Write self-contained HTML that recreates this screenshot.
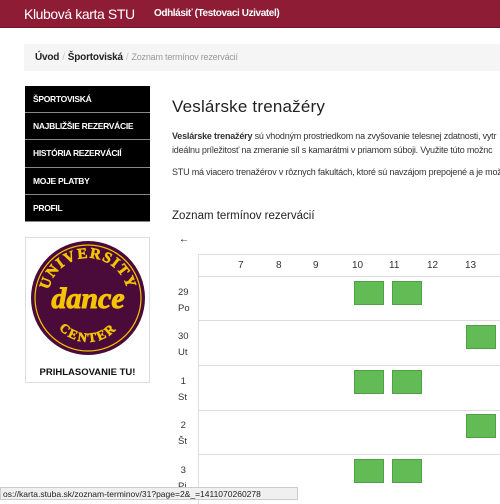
<!DOCTYPE html>
<html><head><meta charset="utf-8"><style>
*{margin:0;padding:0;box-sizing:border-box}
body{width:500px;height:500px;overflow:hidden;background:#fff;font-family:"Liberation Sans",sans-serif;position:relative}
.hdr{position:absolute;left:0;top:0;width:500px;height:28px;background:#8e1c34;border-bottom:1px solid #6d1426}
.hdr .t{position:absolute;left:24px;top:6px;color:#fff;font-size:14px;letter-spacing:-0.4px}
.hdr .u{position:absolute;left:154px;top:8px;color:#fff;font-size:10px;font-weight:bold;letter-spacing:-0.4px}
.bc{position:absolute;left:24px;top:44px;width:476px;height:27px;background:#f5f5f5;font-size:10px;padding:8px 0 0 11px;color:#222;letter-spacing:-0.2px}
.bc b{font-weight:bold}.bc .s{color:#ccc;margin:0 3px}.bc .g{color:#999;font-size:9px}
.nav{position:absolute;left:25px;top:86px;width:125px}
.nav div{height:27.2px;background:#000;color:#fff;font-size:8.5px;font-weight:bold;padding:8px 0 0 8px;border-bottom:1px solid #888;letter-spacing:-0.3px}
.logo{position:absolute;left:25px;top:237px;width:125px;height:146px;border:1px solid #ddd;background:#fff}
.logo .p{position:absolute;left:0;width:123px;top:129px;text-align:center;font-size:9.5px;font-weight:bold;color:#111}
h1{position:absolute;left:172px;top:97px;font-size:17px;font-weight:normal;color:#222;letter-spacing:0.2px}
.p1{position:absolute;left:172px;top:129px;font-size:9px;color:#333;line-height:14px;white-space:nowrap;letter-spacing:-0.2px}
.p2{position:absolute;left:172px;top:167px;font-size:9px;color:#333;white-space:nowrap;letter-spacing:-0.2px}
h2{position:absolute;left:172px;top:210px;font-size:11.5px;font-weight:normal;color:#222}
.ar{position:absolute;left:179px;top:234px;font-size:10px;color:#000}
.tbl{position:absolute;left:198px;top:254px;width:310px;height:250px;border-left:1px solid #ddd;border-top:1px solid #ddd}
.hl{position:absolute;left:198px;width:310px;height:1px;background:#ddd}
.c{position:absolute;top:260px;font-size:10px;color:#333}
.d{position:absolute;left:178px;font-size:9.5px;color:#333;line-height:16px}
.gb{position:absolute;width:30px;height:24px;background:#62bb55;border:1px solid #50a048}
.sb{position:absolute;left:0;top:487px;width:298px;height:13px;background:#f0f0f0;border:1px solid #ccc;font-size:8.5px;color:#222;padding-left:2px;line-height:12px;white-space:nowrap;overflow:hidden}
</style></head><body>
<div class="hdr"><span class="t">Klubová karta STU</span><span class="u">Odhlásiť (Testovaci Uzivatel)</span></div>
<div class="bc"><b>Úvod</b><span class="s">/</span><b>Športoviská</b><span class="s">/</span><span class="g">Zoznam termínov rezervácií</span></div>
<div class="nav"><div>ŠPORTOVISKÁ</div><div>NAJBLIŽŠIE REZERVÁCIE</div><div>HISTÓRIA REZERVÁCIÍ</div><div>MOJE PLATBY</div><div>PROFIL</div></div>
<div class="logo">
<svg width="123" height="124" style="position:absolute;left:0;top:0">
<circle cx="62" cy="60" r="57" fill="#4a0a3a"/>
<circle cx="62" cy="60" r="53" fill="none" stroke="#f5c400" stroke-width="1.2"/>
<defs><path id="a" d="M22,60 A40,40 0 0 1 102,60"/><path id="b" d="M24,66 A38,38 0 0 0 100,66"/></defs>
<text font-family="Liberation Serif" font-weight="bold" font-size="15" fill="#f5c400" stroke="#f5c400" stroke-width="0.6" letter-spacing="1.5"><textPath href="#a" startOffset="50%" text-anchor="middle">UNIVERSITY</textPath></text>
<text font-family="Liberation Serif" font-weight="bold" font-size="13" fill="#f5c400" stroke="#f5c400" stroke-width="0.6" letter-spacing="2"><textPath href="#b" startOffset="50%" text-anchor="middle">CENTER</textPath></text>
<text x="62" y="70" text-anchor="middle" font-family="Liberation Serif" font-style="italic" font-weight="bold" font-size="30" fill="#f5c400" stroke="#f5c400" stroke-width="1">dance</text>
</svg>
<div class="p">PRIHLASOVANIE TU!</div></div>
<h1>Veslárske trenažéry</h1>
<div class="p1"><b>Veslárske trenažéry</b> sú vhodným prostriedkom na zvyšovanie telesnej zdatnosti, vytr<br>ideálnu príležitosť na zmeranie síl s kamarátmi v priamom súboji. Využite túto možnc</div>
<div class="p2">STU má viacero trenažérov v rôznych fakultách, ktoré sú navzájom prepojené a je mož</div>
<h2>Zoznam termínov rezervácií</h2>
<div class="ar">←</div>
<div class="tbl"></div>
<div class="hl" style="top:276px"></div><div class="hl" style="top:320px"></div><div class="hl" style="top:365px"></div><div class="hl" style="top:410px"></div><div class="hl" style="top:454px"></div>
<span class="c" style="left:238px">7</span><span class="c" style="left:276px">8</span><span class="c" style="left:313px">9</span><span class="c" style="left:352px">10</span><span class="c" style="left:389px">11</span><span class="c" style="left:427px">12</span><span class="c" style="left:465px">13</span>
<div class="d" style="top:285px">29<br>Po</div><div class="d" style="top:329px">30<br>Ut</div><div class="d" style="top:374px">&nbsp;1<br>St</div><div class="d" style="top:418px">&nbsp;2<br>Št</div><div class="d" style="top:463px">&nbsp;3<br>Pi</div>
<div class="gb" style="left:354px;top:281px"></div><div class="gb" style="left:392px;top:281px"></div>
<div class="gb" style="left:466px;top:325px"></div>
<div class="gb" style="left:354px;top:370px"></div><div class="gb" style="left:392px;top:370px"></div>
<div class="gb" style="left:466px;top:414px"></div>
<div class="gb" style="left:354px;top:459px"></div><div class="gb" style="left:392px;top:459px"></div>
<div class="sb">os://karta.stuba.sk/zoznam-terminov/31?page=2&amp;_=1411070260278</div>
</body></html>
